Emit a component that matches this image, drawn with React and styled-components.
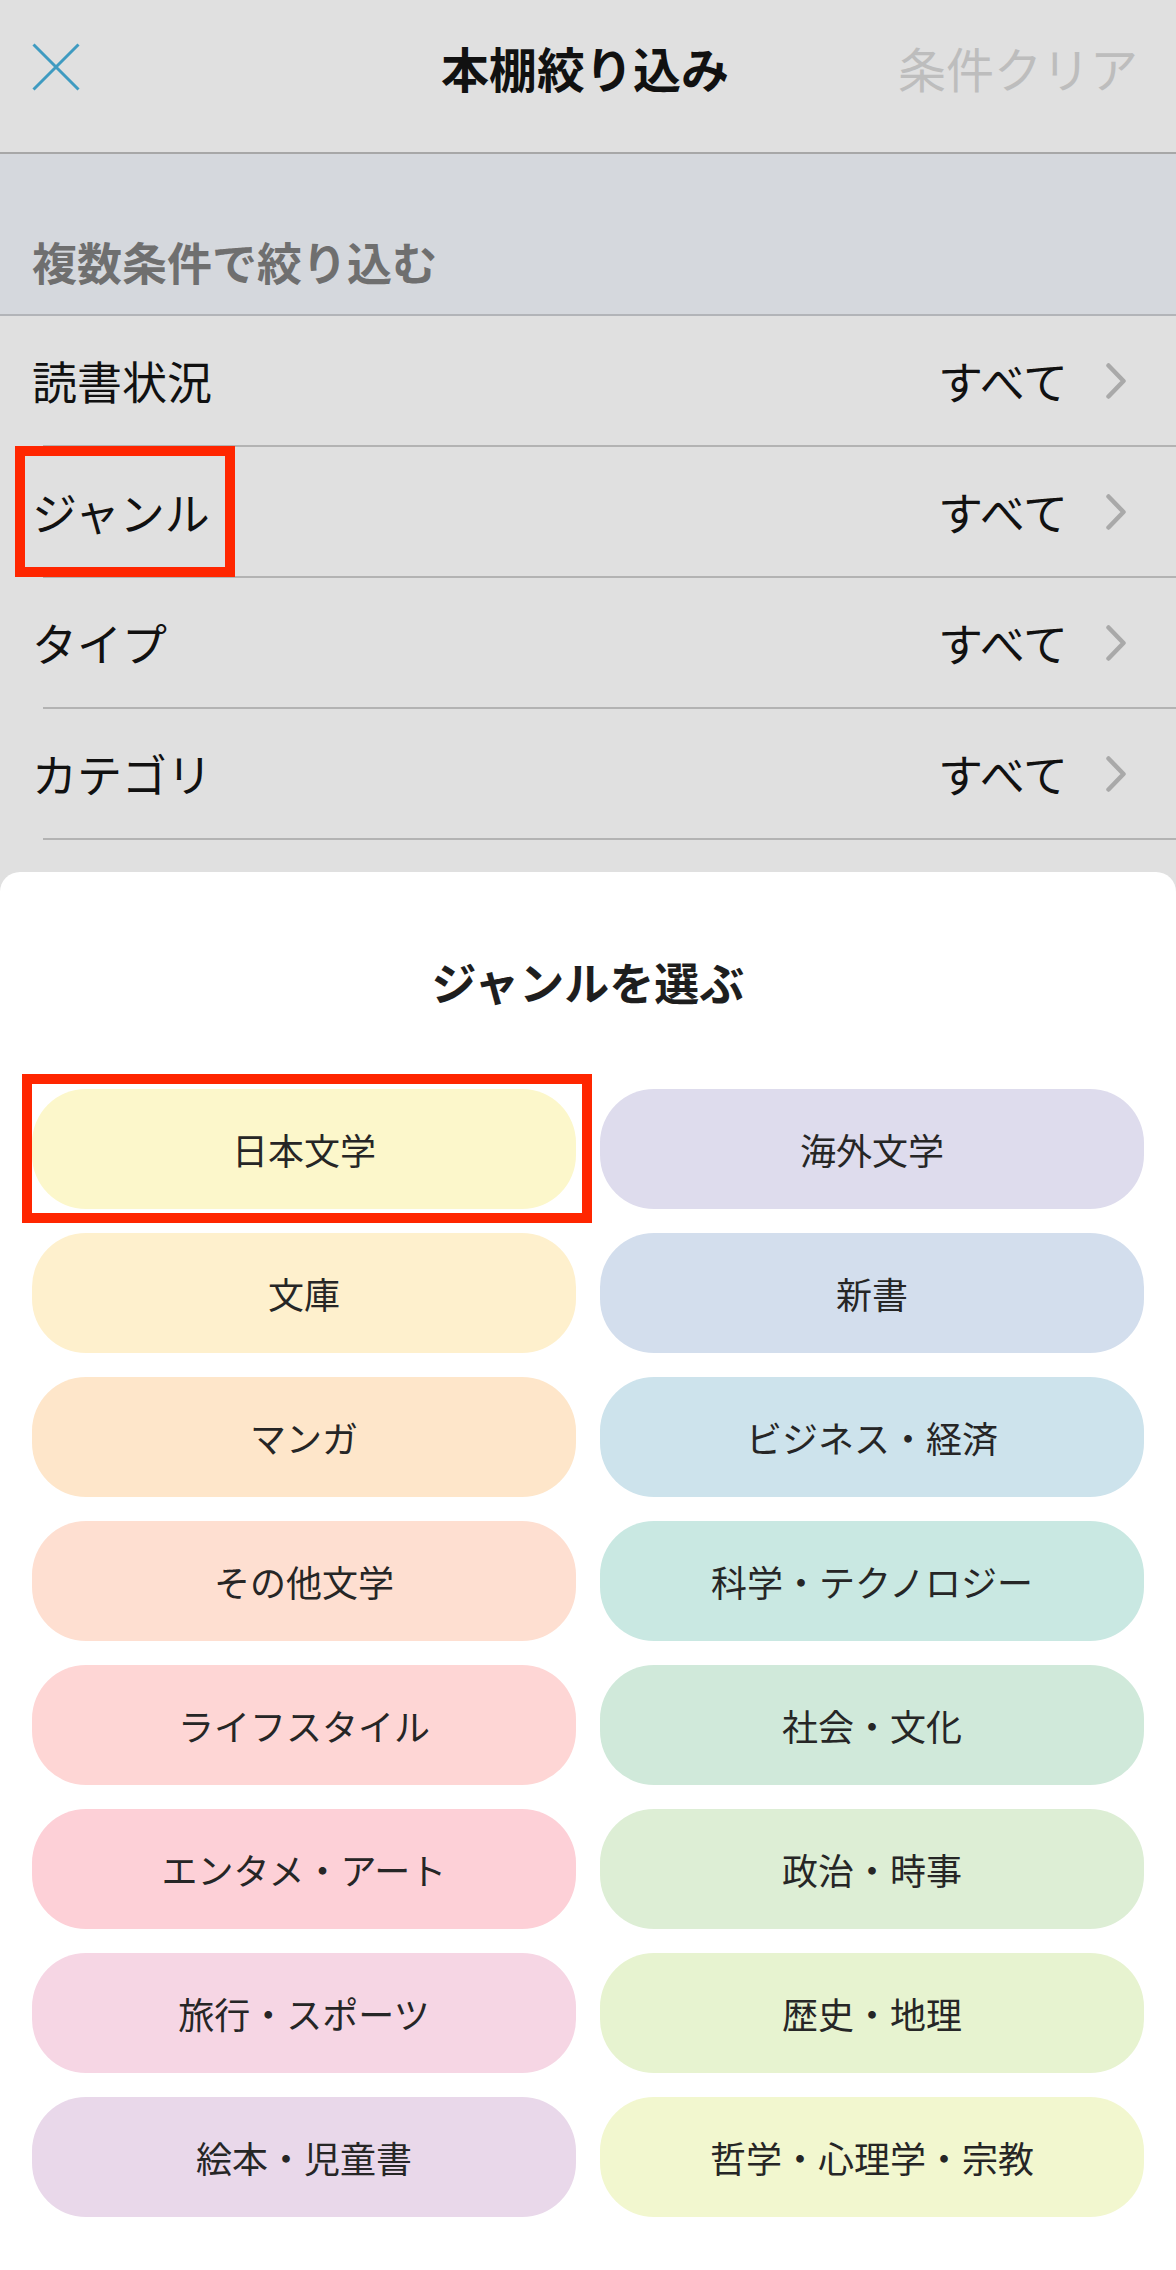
import React from "react";
import styled, { createGlobalStyle } from "styled-components";

const Global = createGlobalStyle`
  html, body { margin: 0; padding: 0; background: #ffffff; }
  body { font-family: "Noto Sans CJK JP", "Noto Sans", sans-serif; -webkit-font-smoothing: antialiased; }
  * { box-sizing: border-box; }
`;

const Page = styled.div`
  width: 1176px;
  min-height: 2270px;
  background: #e0e0e0;
  display: flex;
  flex-direction: column;
`;

const Header = styled.header`
  height: 154px;
  padding: 0 38px 18px 32px;
  background: #e0e0e0;
  border-bottom: 2px solid #a7a7a7;
  display: grid;
  grid-template-columns: 1fr auto 1fr;
  align-items: center;
`;

const CloseButton = styled.button`
  justify-self: start;
  width: 48px;
  height: 48px;
  padding: 0;
  border: 0;
  background: transparent;
  display: flex;
`;

const Title = styled.h1`
  margin: 0;
  font-size: 48px;
  line-height: 60px;
  font-weight: 700;
  color: #111;
`;

const ClearButton = styled.span`
  justify-self: end;
  font-size: 48px;
  line-height: 60px;
  color: #bdbdbd;
`;

const SectionHeader = styled.div`
  height: 162px;
  padding: 78px 32px 0;
  background: #d5d8dd;
  border-bottom: 2px solid #b2b4b8;
  font-size: 45px;
  line-height: 60px;
  font-weight: 700;
  color: #6f6f6f;
`;

const Row = styled.div`
  position: relative;
  height: 129px;
  padding: 0 50px 0 32px;
  display: flex;
  align-items: center;
  justify-content: space-between;
  font-size: 45px;
  color: #111;
`;

const RowValue = styled.span`
  display: flex;
  align-items: center;
  gap: 38px;
`;

const Divider = styled.div`
  height: 2px;
  margin-left: 43px;
  background: #b3b3b3;
`;

const Highlight = styled.div`
  position: absolute;
  border: 10px solid #ff2600;
  pointer-events: none;
`;

const RowHighlight = styled(Highlight)`
  left: 15px;
  top: -1px;
  width: 220px;
  height: 131px;
`;

const Gap = styled.div`
  height: 32px;
`;

const Sheet = styled.section`
  flex: 1;
  background: #ffffff;
  border-radius: 20px 20px 0 0;
  padding: 80px 32px 53px;
`;

const SheetTitle = styled.h2`
  margin: 0 0 77px;
  text-align: center;
  font-size: 45px;
  line-height: 60px;
  font-weight: 700;
  color: #1e1e1e;
`;

const Grid = styled.div`
  display: grid;
  grid-template-columns: 544px 544px;
  column-gap: 24px;
  row-gap: 24px;
`;

const Pill = styled.div`
  position: relative;
  height: 120px;
  border-radius: 54px;
  background: ${(p) => p.$bg};
  display: flex;
  align-items: center;
  justify-content: center;
  font-size: 36px;
  color: #262626;
`;

const PillHighlight = styled(Highlight)`
  left: -10px;
  top: -15px;
  width: 570px;
  height: 149px;
`;

const CloseIcon = () => (
  <svg width="48" height="48" viewBox="0 0 48 48">
    <path d="M1.5 1.5 L46.5 46.5 M46.5 1.5 L1.5 46.5" stroke="#3f9bc1" strokeWidth="3" fill="none" />
  </svg>
);

const Chevron = () => (
  <svg width="20" height="36" viewBox="0 0 20 36">
    <path d="M2.5 2.5 L17.5 18 L2.5 33.5" stroke="#a9a9a9" strokeWidth="4.5" strokeLinecap="round" strokeLinejoin="round" fill="none" />
  </svg>
);

const rows = [
  { label: "読書状況" },
  { label: "ジャンル", marked: true },
  { label: "タイプ" },
  { label: "カテゴリ" },
];

const genres = [
  ["日本文学", "#fcf7cb", true],
  ["海外文学", "#dedced"],
  ["文庫", "#fef0cd"],
  ["新書", "#d3deed"],
  ["マンガ", "#fee6ca"],
  ["ビジネス・経済", "#cde3ec"],
  ["その他文学", "#fedfd1"],
  ["科学・テクノロジー", "#c9e8e2"],
  ["ライフスタイル", "#fed6d5"],
  ["社会・文化", "#d0e9da"],
  ["エンタメ・アート", "#fdd0d7"],
  ["政治・時事", "#ddeed5"],
  ["旅行・スポーツ", "#f6d6e4"],
  ["歴史・地理", "#e7f3d0"],
  ["絵本・児童書", "#e9d8ea"],
  ["哲学・心理学・宗教", "#f2f7cf"],
];

export default function App() {
  return (
    <>
      <Global />
      <Page>
        <Header>
          <CloseButton aria-label="閉じる">
            <CloseIcon />
          </CloseButton>
          <Title>本棚絞り込み</Title>
          <ClearButton>条件クリア</ClearButton>
        </Header>
        <SectionHeader>複数条件で絞り込む</SectionHeader>
        {rows.map((r) => (
          <React.Fragment key={r.label}>
            <Row>
              <span>{r.label}</span>
              <RowValue>
                すべて
                <Chevron />
              </RowValue>
              {r.marked && <RowHighlight />}
            </Row>
            <Divider />
          </React.Fragment>
        ))}
        <Gap />
        <Sheet>
          <SheetTitle>ジャンルを選ぶ</SheetTitle>
          <Grid>
            {genres.map(([name, bg, marked]) => (
              <Pill key={name} $bg={bg}>
                {name}
                {marked && <PillHighlight />}
              </Pill>
            ))}
          </Grid>
        </Sheet>
      </Page>
    </>
  );
}
